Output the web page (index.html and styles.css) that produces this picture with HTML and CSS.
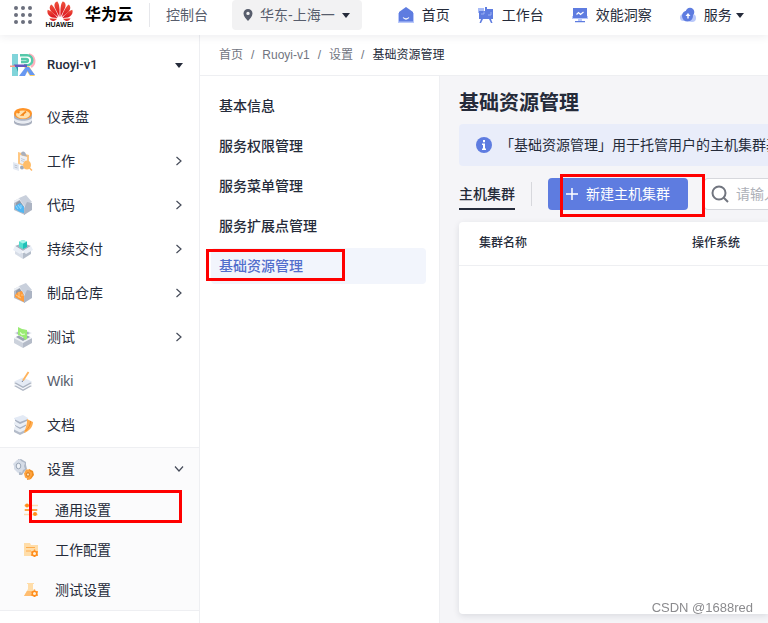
FILE: index.html
```html
<!DOCTYPE html>
<html lang="zh-CN">
<head>
<meta charset="utf-8">
<title>基础资源管理</title>
<link rel="stylesheet" href="styles.css">
</head>
<body>
<header class="topbar">
  <button class="apps" aria-label="应用">
    <svg width="18" height="18" viewBox="0 0 18 18" fill="#6b6f7d"><circle cx="2" cy="2" r="2"/><circle cx="9" cy="2" r="2"/><circle cx="16" cy="2" r="2"/><circle cx="2" cy="9" r="2"/><circle cx="9" cy="9" r="2"/><circle cx="16" cy="9" r="2"/><circle cx="2" cy="16" r="2"/><circle cx="9" cy="16" r="2"/><circle cx="16" cy="16" r="2"/></svg>
  </button>
  <a class="brand" href="#">
    <span class="brand-mark">
      <svg width="26" height="20" viewBox="0 0 26 20">
        <defs><linearGradient id="petal" x1="0" y1="0" x2="0" y2="1"><stop offset="0" stop-color="#f0523c"/><stop offset="1" stop-color="#d80f1c"/></linearGradient></defs>
        <g fill="url(#petal)">
          <path d="M12.5 16C12.8 9 12.6 3 10.4.4 7.500 1 6.800 3.600 8 7z"/><path d="M13.500 16C13.200 9 13.400 3 15.600.4 18.500 1 19.200 3.600 18 7z"/>
          <path d="M11.400 16.300C9.500 10 6.800 5.500 4.300 3.600 1.800 5.600 2.400 9 5 11.300z"/><path d="M14.600 16.300C16.500 10 19.200 5.500 21.700 3.600 24.200 5.600 23.600 9 21 11.300z"/>
          <path d="M10.500 17C7.500 13 3.500 9.500.8 8.800-.6 12 1.500 15.200 5 16.400z"/><path d="M15.500 17C18.500 13 22.500 9.500 25.200 8.800 26.600 12 24.500 15.200 21 16.400z"/>
          <path d="M10.200 17.700 2.500 17.200C3.600 20 6.500 20.600 8.400 19.200z"/><path d="M15.800 17.700 23.500 17.200C22.400 20 19.500 20.600 17.600 19.200z"/>
        </g>
      </svg>
      <span class="brand-sub">HUAWEI</span>
    </span>
    <span class="brand-name">华为云</span>
  </a>
  <a class="console" href="#">控制台</a>
  <button class="region">
    <svg width="10" height="12" viewBox="0 0 10 12"><path fill="#575d6c" fill-rule="evenodd" d="M5 0a4.500 4.500 0 0 1 4.500 4.500C9.500 7.500 6.500 10 5 12 3.500 10 .5 7.500.5 4.500A4.500 4.500 0 0 1 5 0zm0 2.700a1.700 1.700 0 1 0 0 3.400 1.700 1.700 0 0 0 0-3.400z"/></svg>
    <span>华东-上海一</span>
    <svg width="8" height="5" viewBox="0 0 8 5"><path fill="#252b3a" d="M0 0h8L4 5z"/></svg>
  </button>
  <nav class="topnav">
    <a href="#"><svg width="16" height="16" viewBox="0 0 16 16"><path fill="#b9c8fa" d="M0 6h3v7h10V6h3v10H0z"/><path fill="#5e7ce0" d="M8 0l7 5v9.500H1V5z"/><path fill="none" stroke="#fff" stroke-width="1.300" d="M5.200 10.500c1.400 2 4.200 2 5.600 0"/></svg>首页</a>
    <a href="#"><svg width="16" height="16" viewBox="0 0 16 16"><path fill="#a9bcf7" d="M0 1h6v5H0z"/><path fill="#5e7ce0" d="M7 0h2v2h6v10H1V4h6zM3 12h2l-2 4H1.500zM11 12h2l1.500 4H13z"/><path fill="none" stroke="#a9bcf7" stroke-width=".8" d="M3 7h3V4.500M10 8h3V5"/></svg>工作台</a>
    <a href="#"><svg width="16" height="16" viewBox="0 0 16 16"><path fill="#b9c8fa" d="M0 9h16v3H0zM6 12h4v2H6z"/><path fill="#5e7ce0" d="M1 1h14v10H1zM3 14h10v1.200H3z"/><path fill="none" stroke="#fff" stroke-width="1.200" d="M4.500 7.500l2-2 2 2 3-2.500"/></svg>效能洞察</a>
    <a href="#"><svg width="16" height="16" viewBox="0 0 16 16"><circle cx="12" cy="11" r="4" fill="#b9c8fa"/><circle cx="3.500" cy="10.500" r="3.500" fill="#b9c8fa"/><circle cx="10" cy="5" r="4.300" fill="#5e7ce0"/><circle cx="7.500" cy="9" r="5.500" fill="#5e7ce0"/><path fill="#fff" d="M8 6l-2.500 3h1.800v2.500h1.400V9h1.800z"/></svg>服务<svg class="caret" width="8" height="5" viewBox="0 0 8 5"><path fill="#252b3a" d="M0 0h8L4 5z"/></svg></a>
  </nav>
</header>

<div class="shell">
  <aside class="sidebar">
    <button class="project">
      <svg width="26" height="24" viewBox="0 0 26 24"><path fill="#80d4da" d="M2 1h6v22H2z"/><path fill="none" stroke="#ffb0bd" stroke-width="2.500" d="M19 1.500c6 1.500 7 9 2 12.500"/><path fill="none" stroke="#55c9aa" stroke-width="2.500" d="M10 2.300h7c7 0 7 10 0 10h-3M11 6h5c2.500 0 2.500 3 0 3h-5"/><path fill="#ffd166" d="M14 14l5-1 6 10h-5z"/><path fill="#6898f1" d="M9 23l6-8h4l-4 8z"/><path fill="#6898f1" d="M15 14h4l6 8h-5z"/><path fill="#6558bd" d="M4 11.500h13V14H3z"/><path fill="#ff9e85" d="M0 12.500h5V14H0z"/><path fill="#279da5" d="M6 14h2v5z"/></svg>
      <span class="project-name">Ruoyi-v1</span>
      <svg width="8" height="5" viewBox="0 0 8 5"><path fill="#252b3a" d="M0 0h8L4 5z"/></svg>
    </button>
    <nav>
      <ul class="menu">
        <li><a href="#"><svg class="ico" viewBox="0 0 20 20"><path fill="#a9b0bf" d="M1 12c0 6 18 6 18 0v3c0 5-18 5-18 0z"/><path fill="#e7ebf2" d="M1 8v4c0 5.500 18 5.500 18 0V8z"/><path fill="#adb4c3" d="M1 7v3c0 5 18 5 18 0V7z"/><ellipse cx="10" cy="6.500" rx="9" ry="5.500" fill="#ff9326"/><ellipse cx="10" cy="7.500" rx="7" ry="4" fill="#ffe1ad"/><path fill="none" stroke="#f68718" stroke-width="1.700" d="M4.500 6l2-1.500M13 4.500l-4 3.500h2"/></svg><span>仪表盘</span></a></li>
        <li><a href="#"><svg class="ico" viewBox="0 0 20 20"><path fill="#ffc883" d="M5 1l11 3v12L5 13z"/><path fill="#eef1f6" d="M7 4l7 2v9l-7-3z"/><path fill="#a9b0be" d="M8 3c0-4 5-3 5 1l2 1.500-6-1z"/><path stroke="#c3cad6" fill="none" d="M8 7.500l4 1.500M8 9.500l3 1"/><path fill="#e4eaf4" d="M0 11l6 2v7l-6-2z"/><path stroke="#bac3d1" fill="none" d="M1.500 14l3 1M1.500 16l3 1"/><circle cx="9" cy="16.500" r="2" fill="#a3acba"/><ellipse cx="14" cy="14" rx="4" ry="4.500" fill="#ffbd68"/><path stroke="#ffb765" stroke-width="1.500" d="M16.500 17l2.500 2.500"/></svg><span>工作</span><svg class="arrow" viewBox="0 0 8 10"><path d="M1.500 1l4.500 4-4.500 4"/></svg></a></li>
        <li><a href="#"><svg class="ico" viewBox="0 0 20 20"><path fill="#b6bdca" d="M1 6l6-3 5 9v8L1 15z"/><path fill="#929baa" d="M3 8l4-3 4 6v7l-8-4z"/><path fill="#c9d0dc" d="M6 3l7-3 6 7-6 3-1 2z"/><path fill="#edf0f5" d="M1 6l5-3 6 9v1L6.500 5 1 8z"/><path fill="#acb4c3" d="M12 11l2-4 5 1v7l-8 5z"/><path fill="#51b7f3" d="M2 11l5-3 4 4v6l-4-1-5-3z"/><path stroke="#a5e0ff" fill="none" stroke-width=".8" d="M3 11l2 3M5 10l3 4M8 10v3"/></svg><span>代码</span><svg class="arrow" viewBox="0 0 8 10"><path d="M1.500 1l4.500 4-4.500 4"/></svg></a></li>
        <li><a href="#"><svg class="ico" viewBox="0 0 20 20"><path fill="#a8b1c0" d="M2 7l8-3 8 3-8 5z"/><path fill="#d7dde7" d="M2 11l8 3v6l-8-5z"/><path fill="#b4bdca" d="M10 14l8-3v4l-8 5z"/><path fill="#e9eef6" d="M2 7L0 11l7 4 3-3zM18 7l2 4-7 4-3-3z"/><path fill="#52dfcf" d="M6 2.500L10 1l4 1.500V8l-4 2-4-2z"/><path fill="#1fc0b8" d="M10 4.500l4-2V8l-4 2z"/><path fill="#a8f5e9" d="M6 2.500L10 1l4 1.500-4 2z"/></svg><span>持续交付</span><svg class="arrow" viewBox="0 0 8 10"><path d="M1.500 1l4.500 4-4.500 4"/></svg></a></li>
        <li><a href="#"><svg class="ico" viewBox="0 0 20 20"><path fill="#b6bdca" d="M1 6l6-3 5 9v8L1 15z"/><path fill="#929baa" d="M3 8l4-3 4 6v7l-8-4z"/><path fill="#c9d0dc" d="M6 3l7-3 6 7-6 3-1 2z"/><path fill="#edf0f5" d="M1 6l5-3 6 9v1L6.500 5 1 8z"/><path fill="#acb4c3" d="M12 11l2-4 5 1v7l-8 5z"/><path fill="#ff9c39" d="M2 12l3-3 4-1 2 5v6l-4-2-5-3z"/><path stroke="#ffd293" fill="none" stroke-width=".8" d="M3 12l5 3M6 9v6M8 12h3"/></svg><span>制品仓库</span><svg class="arrow" viewBox="0 0 8 10"><path d="M1.500 1l4.500 4-4.500 4"/></svg></a></li>
        <li><a href="#"><svg class="ico" viewBox="0 0 20 20"><path fill="#ccd2dc" d="M1 11l9 4v6l-9-5z"/><path fill="#b4bbc8" d="M10 15l9-4v5l-9 5z"/><path fill="#edf0f5" d="M1 11l9-5 9 5-9 5z"/><path fill="#9aa3b3" d="M3 10l7-4 7 4-7 4z"/><path fill="#e7ebf1" d="M1 6l9-4 9 4-9 5z"/><path fill="#a2aaba" d="M3 6l7-3 7 3-7 3.500z"/><path fill="#9aeb74" d="M5 0l4 2 5 1v9l-2 1-2-3-5-2z"/><path fill="none" stroke="#e3ffd3" stroke-width="1.200" d="M7 5.500l2 2 3-.5"/></svg><span>测试</span><svg class="arrow" viewBox="0 0 8 10"><path d="M1.500 1l4.500 4-4.500 4"/></svg></a></li>
        <li><a href="#"><svg class="ico" viewBox="0 0 20 20"><path fill="#b0b7c4" d="M1 15l9-4 9 4-9 5z"/><path fill="#f3f5f9" d="M1 13.500l9-4 9 4-9 5z"/><path fill="#aab2c0" d="M1 12l9-4 9 4-9 5z"/><path fill="#e5ebf5" d="M1 10.500l9-4 9 4-9 5z"/><path stroke="#ffb35b" stroke-width="1.800" d="M15.500 1L10 9.500"/><path stroke="#76819a" d="M10 9.500l-1 1.500"/></svg><span class="latin">Wiki</span></a></li>
        <li><a href="#"><svg class="ico" viewBox="0 0 20 20"><path fill="#b3bbc9" d="M1 14l6-2 6 2v3l-6 3-6-3z"/><path fill="#e9eef5" d="M1 12.500l6-2 6 2v2l-6 3-6-3z"/><path fill="#a9b2c2" d="M2 9l5-2 6 2v2l-6 3-5-3z"/><path fill="#e9eef5" d="M1 7.500l6-2 6 2v2l-6 3-6-3z"/><path fill="#a9b2c2" d="M2 4l7-3 5 3v2L7 9 2 6z"/><path fill="#e3eaf5" d="M1 3l9-3 5 3v1L7 7 1 4z"/><path fill="#ffae51" d="M14 4l6 3c0 5-4 9-9 11 1-4 3-7 3-14z"/><path fill="none" stroke="#f58e26" d="M17.500 6c0 4-2 7-5 10"/></svg><span>文档</span></a></li>
      </ul>
      <div class="group">
        <a class="group-head" href="#"><svg class="ico" viewBox="0 0 20 20"><path fill="#aeb8c7" d="M5 0h3l5 3v3l1 4-2 2-3 4H6z"/><path fill="#d5dce7" d="M4 1l3-1 1 2 2 1 2 1-1 3 1 3-2 1-1 3-2-1-2 1-2-2-2-2V7L0 5l2-2z"/><ellipse cx="5.500" cy="7" rx="2.300" ry="2.800" fill="#f0f3f8" stroke="#9aa6b6"/><path fill="#ef8d1f" d="M16 10l4 2 1 4-3 4-4 1z"/><path fill="#ffa33e" d="M13 10.500h3l1 2 2 1v3l-1 1-1 3-3-1-2-1-1-4z"/><ellipse cx="15" cy="15.500" rx="1.500" ry="1.800" fill="#ffdfad" stroke="#db7a19"/></svg><span>设置</span><svg class="arrow-down" viewBox="0 0 10 8"><path d="M1 1.500L5 6l4-4.500"/></svg></a>
        <ul class="submenu">
          <li><a href="#"><svg class="ico-sm" viewBox="0 0 14 14"><path stroke="#ffddb0" stroke-width="1.500" d="M0 2.500h14M0 7h14M0 11.500h14"/><path stroke="#ff8d1c" stroke-width="1.500" d="M1 7h12"/><circle cx="3" cy="2.500" r="2" fill="#ff8d1c"/><circle cx="11" cy="11" r="2" fill="#ff8d1c"/></svg><span>通用设置</span></a><span class="mark mark-general"></span></li>
          <li><a href="#"><svg class="ico-sm" viewBox="0 0 14 14"><path fill="#ffdda9" d="M0 0h6l1 2h7v11H0z"/><path stroke="#ffad4e" d="M2 4.500h9M2 8h5"/><circle cx="10.500" cy="10.500" r="2.300" fill="#fff1da" stroke="#ff8d1c" stroke-width="1.600"/><path stroke="#ff8d1c" stroke-width="1.300" d="M10.500 6.500v1.200M10.500 13v1M7.200 8.700l1 .6M13 11.800l1 .6M7.200 12.400l1-.6M13 9.200l1-.6"/></svg><span>工作配置</span></a></li>
          <li><a href="#"><svg class="ico-sm" viewBox="0 0 14 14"><path fill="#ffdda9" d="M3 0h7v1H9v5l4 7H0l4-7V1H3z"/><path fill="#ffbd70" d="M3 8h4v5H0z"/><circle cx="10.500" cy="10.500" r="2.300" fill="#fff1da" stroke="#ff8d1c" stroke-width="1.600"/><path stroke="#ff8d1c" stroke-width="1.300" d="M10.500 6.500v1.200M10.500 13v1M7.200 8.700l1 .6M13 11.800l1 .6M7.200 12.400l1-.6M13 9.200l1-.6"/></svg><span>测试设置</span></a></li>
        </ul>
      </div>
    </nav>
  </aside>

  <div class="content">
    <nav class="crumbs" aria-label="面包屑">
      <a href="#">首页</a><span>/</span><a href="#">Ruoyi-v1</a><span>/</span><a href="#">设置</a><span>/</span><span class="current">基础资源管理</span>
    </nav>
    <div class="columns">
      <nav class="settings-nav">
        <a href="#">基本信息</a>
        <a href="#">服务权限管理</a>
        <a href="#">服务菜单管理</a>
        <a href="#">服务扩展点管理</a>
        <a class="active" href="#">基础资源管理<span class="mark mark-resource"></span></a>
      </nav>
      <main class="main">
        <h1>基础资源管理</h1>
        <div class="notice">
          <svg width="16" height="16" viewBox="0 0 16 16"><circle cx="8" cy="8" r="8" fill="#5e7ce0"/><path fill="#fff" d="M7 3h2v2.200H7zM6 6.500h3v5h1V13H6v-1.500h1V8H6z"/></svg>
          <p>「基础资源管理」用于托管用户的主机集群基</p>
        </div>
        <div class="toolbar">
          <a class="tab" href="#">主机集群</a>
          <span class="divider"></span>
          <button class="create"><svg width="12" height="12" viewBox="0 0 12 12"><path stroke="#fff" stroke-width="1.500" d="M6 0v12M0 6h12"/></svg><span>新建主机集群</span><span class="mark mark-create"></span></button>
          <label class="search">
            <svg width="18" height="18" viewBox="0 0 18 18" fill="none" stroke="#71757f" stroke-width="2"><circle cx="8" cy="8" r="6.500"/><path d="M12.500 12.500L17 17"/></svg>
            <input type="text" placeholder="请输入" aria-label="搜索">
          </label>
        </div>
        <div class="card">
          <table>
            <thead><tr><th class="col-name">集群名称</th><th>操作系统</th></tr></thead>
            <tbody></tbody>
          </table>
        </div>
      </main>
    </div>
  </div>
</div>
<div class="watermark">CSDN @1688red</div>
</body>
</html>
```
FILE: styles.css
```css
* { box-sizing: border-box; }

body {
  margin: 0;
  min-height: 100vh;
  display: flex;
  flex-direction: column;
  overflow: hidden;
  font: 14px/20px "Liberation Sans", "Noto Sans CJK SC", sans-serif;
  color: #252b3a;
  background: #fff;
}

a { color: inherit; text-decoration: none; }
button { border: 0; padding: 0; background: none; font: inherit; color: inherit; }
ul { list-style: none; margin: 0; padding: 0; }
svg { display: block; flex: none; }

.topbar {
  position: relative;
  z-index: 1;
  display: flex;
  align-items: center;
  padding: 0 0 5px 14px;
  white-space: nowrap;
  background: #fff;
  box-shadow: 0 2px 8px rgba(37, 43, 58, 0.08);
}
.brand { display: flex; align-items: center; gap: 12px; margin-left: 14px; }
.brand-mark { display: flex; flex-direction: column; align-items: center; width: 27px; }
.brand-sub { font: bold 7px/8px "Liberation Sans", sans-serif; color: #111; }
.brand-name { font-size: 16px; font-weight: 700; color: #000; }
.console { margin-left: 16px; padding-left: 16px; color: #575d6c; border-left: 1px solid #e6e7eb; line-height: 24px; }
.region {
  display: flex;
  align-items: center;
  gap: 7px;
  height: 30px;
  margin-left: 24px;
  padding: 0 12px 0 11px;
  color: #575d6c;
  background: #f2f2f3;
  border-radius: 4px;
}
.topnav { display: flex; gap: 28px; margin-left: 36px; }
.topnav a { display: flex; align-items: center; gap: 8px; }
.topnav .caret { margin-left: -4px; }

.shell { flex: 1; display: flex; }
.sidebar { width: 200px; flex: none; border-right: 1px solid #eeeff2; }
.project { display: flex; align-items: center; width: 100%; height: 60px; padding: 0 16px 0 10px; }
.project-name { flex: 1; margin-left: 11px; text-align: left; font-family: Roboto, sans-serif; font-size: 13px; font-weight: 500; }
.menu a, .group-head { display: flex; align-items: center; height: 44px; padding: 0 16px 0 13px; }
.menu span, .group-head span { flex: 1; margin-left: 14px; }
.menu .latin { color: #575d6c; }
.ico { width: 20px; height: 20px; overflow: visible; }
.arrow { width: 8px; height: 10px; fill: none; stroke: #454b59; stroke-width: 1.2; }
.arrow-down { width: 10px; height: 8px; fill: none; stroke: #454b59; stroke-width: 1.2; }
.group { background: #fbfbfc; border: solid #eeeff2; border-width: 1px 0; }
.group-head { height: 42px; padding-right: 15px; }
.submenu li { position: relative; }
.submenu a { display: flex; align-items: center; gap: 17px; height: 40px; padding-left: 24px; }
.ico-sm { width: 14px; height: 14px; }

.content { flex: 1; min-width: 0; display: flex; flex-direction: column; }
.crumbs { display: flex; align-items: center; gap: 8px; height: 41px; padding-left: 19px; font-size: 12px; color: #71757f; white-space: nowrap; border-bottom: 1px solid #eeeff2; }
.crumbs .current { color: #252b3a; }
.columns { flex: 1; display: flex; }

.settings-nav { width: 240px; flex: none; display: flex; flex-direction: column; gap: 4px; padding: 12px 13px 0 11px; font-weight: 500; border-right: 1px solid #eeeff2; }
.settings-nav a { position: relative; padding: 8px; border-radius: 4px; }
.settings-nav .active { color: #526ecc; background: #f2f5fc; }

.main { flex: 1; min-width: 0; display: flex; flex-direction: column; padding: 12px 0 9px 19px; overflow: hidden; background: #f5f5f8; white-space: nowrap; }
h1 { margin: 0 0 8px; font: 700 20px/28px "Noto Sans CJK SC", sans-serif; }
.notice { display: flex; align-items: center; gap: 8px; height: 42px; padding-left: 17px; overflow: hidden; background: #e9edfa; border-radius: 4px 0 0 4px; }
.notice p { margin: 0; }
.toolbar { display: flex; align-items: center; gap: 16px; margin: 12px 0; }
.tab { padding: 6px 0 4px; border-bottom: 2px solid #252b3a; font-weight: 500; }
.divider { width: 1px; height: 24px; background: #d7d8dd; }
.create { position: relative; display: flex; align-items: center; justify-content: center; gap: 8px; width: 140px; height: 32px; flex: none; color: #fff; background: #5e7ce0; border-radius: 4px; }
.search { flex: 1; min-width: 0; display: flex; align-items: center; gap: 7px; height: 32px; padding-left: 6px; background: #fff; border: 1px solid #d7d8dd; border-right: 0; border-radius: 4px 0 0 4px; }
.search input { width: 100%; min-width: 0; padding: 0; border: 0; outline: 0; font: inherit; background: transparent; }
.search input::placeholder { color: #adb0b8; }

.card { flex: 1; background: #fff; border-radius: 4px 0 0 4px; box-shadow: 0 2px 6px rgba(37, 43, 58, 0.12); }
table { width: 100%; border-collapse: collapse; }
th { height: 43px; padding: 0 0 0 20px; text-align: left; font-size: 12px; font-weight: 500; border-bottom: 1px solid #eeeff2; }
.col-name { width: 213px; }

/* Highlight frames laid over the steps to follow */
.mark { position: absolute; z-index: 2; border: 3px solid #f00; pointer-events: none; }
.mark-general { left: 29px; right: 17px; top: 0; height: 33px; }
.mark-resource { left: -5px; width: 139px; top: 1px; height: 32px; }
.mark-create { left: 12px; right: -17px; top: -4px; height: 43px; }

.watermark { position: fixed; right: 15px; bottom: 5px; z-index: 3; font-size: 13px; color: #8b8b8e; }
```
